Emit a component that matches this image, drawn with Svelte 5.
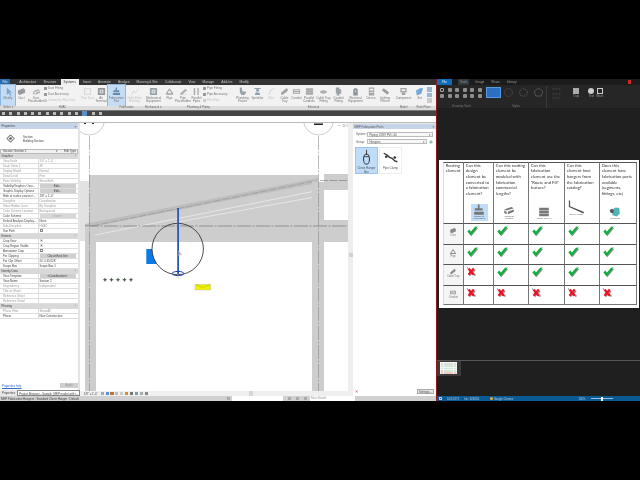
<script>
  const ic = {
    arrow: 'M3 .5V9l2-2 2 2.8 1.3-1L6.4 6.2 9 6z',
    duct: 'M1 4l6-2.5 2 1.5v3.5L3 9 1 7.5zM3 5.5V9',
    ductp: 'M1 4.5l6-2 2 1-6 2zM1 5.5l2 1v2l-2-1zM4 6.5l5-2v2l-5 2z',
    term: 'M1 1h8v8H1zM2.5 2.5v5h5v-5z',
    fab: 'M4 .5h1.5v3H8v2H1.5v-2H4zM1 6.5h8V9H1z',
    point: 'M1 8l3-4 2 2 3-5v1.5L6.2 7.5l-2-2L2 8.8z',
    mech: 'M1 1h8v8H1zM3 3v4h4V3z M4 4h2v2H4z',
    pipe: 'M1 7L5 1.5 9 7v1.5H1zM2.5 7h5L5 3.5z',
    pipep: 'M1 7.5L7 2l2 1.5-6 5.5zM1 8.5h8V9H1z',
    pp: 'M2 1h1.5v8H2zM6 1h1.5v8H6z',
    fix: 'M2 .5h2l1 4.5h4v1.5L7 9H4L2 6z',
    spr: 'M1.5 1h7v1.2H6L7 5H3l1-2.8H1.5zM3 6h4l1 3H2z',
    wire: 'M1.5 9C2 4 5 1.5 9 1v1C5.5 3 3 5 2.5 9z',
    tray: 'M1 6.5L7 1.5l2 1-1 2.5-5 3.5H1.5zM3 6l3.5-2.5',
    cond: 'M1 2.5h8v5H1zM2 3.5v1h6v-1zM2 5.5v1h6v-1z',
    pc: 'M1 1.5h8v2H1zM1 4h8v2H1zM1 6.5h8v2H1z',
    tf: 'M1 5.5C2 3 8 3 9 5.5 8 8 2 8 1 5.5zM3 5.5h4',
    cf: 'M2 .5h4v2h2v5H6v2H3V7H2z',
    eq: 'M3.5 1.5h3v1h1v7h-5v-7h1zM4.5 4v1.5h1V4z',
    dev: 'M2 .5h6v9H2zM3 2v2h4V2zM3 5.5v1h4v-1z',
    light: 'M1 3.5L3 1.5l6 4.5-2 2.5z',
    comp: 'M1.5 1H8.5V6H1.5zM3 2.5V4.500H7V2.500zM3 6.500h4V9H3z',
    set: 'M1 4l5-3 3 .5-2 6-5 2z'
  };
  const tools = [
    { w: 14, t: 'Modify', i: 'arrow', c: '#6f93bd', on: 1 },
    { w: 13, t: 'Duct', i: 'duct', c: '#7d7d7d' },
    { w: 16, t: 'Duct Placeholder', i: 'ductp', c: '#9a9a9a' },
    { w: 37, small: ['Duct Fitting', 'Duct Accessory', 'Convert to Flex Duct'] },
    { w: 13, t: 'Flex Duct', i: 'term', c: '#d5d5d5', off: 1 },
    { w: 14, t: 'Air Terminal', i: 'mech', c: '#777a80' },
    { w: 17, t: 'Fabrication Part', i: 'fab', c: '#4d6f92', on: 1 },
    { w: 19, t: 'Multi-Point Routing', i: 'point', c: '#d2d2d2', off: 1 },
    { w: 19, t: 'Mechanical Equipment', i: 'mech', c: '#7b8a8e' },
    { w: 13, t: 'Pipe', i: 'pipe', c: '#8c8c8c' },
    { w: 14, t: 'Pipe Placeholder', i: 'pipep', c: '#9a9a9a' },
    { w: 13, t: 'Parallel Pipes', i: 'pp', c: '#8f8f8f' },
    { w: 31, small: ['Pipe Fitting', 'Pipe Accessory', 'Flex Pipe'] },
    { w: 17, t: 'Plumbing Fixture', i: 'fix', c: '#7a8a94' },
    { w: 13, t: 'Sprinkler', i: 'spr', c: '#6e8496' },
    { w: 14, t: 'Wire', i: 'wire', c: '#cfcfcf', off: 1 },
    { w: 13, t: 'Cable Tray', i: 'tray', c: '#8c8c8c' },
    { w: 11, t: 'Conduit', i: 'cond', c: '#8a8a8a' },
    { w: 14, t: 'Parallel Conduits', i: 'pc', c: '#8f8f8f' },
    { w: 15, t: 'Cable Tray Fitting', i: 'tf', c: '#999' },
    { w: 15, t: 'Conduit Fitting', i: 'cf', c: '#7f8a92' },
    { w: 19, t: 'Electrical Equipment', i: 'eq', c: '#6d7480' },
    { w: 12, t: 'Device', i: 'dev', c: '#8e8e8e' },
    { w: 16, t: 'Lighting Fixture', i: 'light', c: '#808080' },
    { w: 21, t: 'Component', i: 'comp', c: '#8d8d8d' },
    { w: 11, t: 'Set', i: 'set', c: '#4f8fd0' },
    { w: 8, mini: 1 }
  ];
  const tabs = ['Architecture', 'Structure', 'Systems', 'Insert', 'Annotate', 'Analyze', 'Massing & Site', 'Collaborate', 'View', 'Manage', 'Add-Ins', 'Modify'];
  const panels = [
    { w: 15, t: 'Select ▾' }, { w: 93, t: 'HVAC' }, { w: 35, t: 'Fabrication' }, { w: 19, t: 'Mechanical ▾' },
    { w: 71, t: 'Plumbing & Piping' }, { w: 159, t: 'Electrical' }, { w: 21, t: 'Model' }, { w: 19, t: 'Work Plane' }
  ];
  const sections = [
    { h: 'Graphics', rows: [
      ['View Scale', '1/4" = 1\'-0"', 'dim'], ['Scale Value    1:', '48', 'dim'], ['Display Model', 'Normal', 'dim'],
      ['Detail Level', 'Fine', 'dim'], ['Parts Visibility', 'Show Both', 'dim'],
      ['Visibility/Graphics Over...', 'Edit...', 'btn'], ['Graphic Display Options', 'Edit...', 'btn'],
      ['Hide at scales coarser t...', '1/8" = 1\'-0"'], ['Discipline', 'Coordination', 'dim'],
      ['Show Hidden Lines', 'By Discipline', 'dim'], ['Color Scheme Location', 'Background', 'dim'],
      ['Color Scheme', '<none>', 'btnd'], ['Default Analysis Display...', 'None'],
      ['Sub-Discipline', 'HVAC', 'dim'], ['Sun Path', '', 'off']
    ] },
    { h: 'Extents', rows: [
      ['Crop View', '', 'on'], ['Crop Region Visible', '', 'on'], ['Annotation Crop', '', 'off'],
      ['Far Clipping', 'Clip without line', 'btn'], ['Far Clip Offset', '20\' 0 45/128"'], ['Scope Box', 'Scope Box 1']
    ] },
    { h: 'Identity Data', rows: [
      ['View Template', '<Coordination>', 'btn'], ['View Name', 'Section 2'], ['Dependency', 'Independent', 'dim'],
      ['Title on Sheet', '', 'dim'], ['Reference Sheet', '', 'dim'], ['Reference Detail', '', 'dim']
    ] },
    { h: 'Phasing', rows: [['Phase Filter', 'Show All', 'dim'], ['Phase', 'New Construction']] }
  ];
  const heads = [
    ['Routing', 'element'],
    ['Can this', 'design', 'element be', 'converted to', 'a fabrication', 'element?'],
    ['Can this routing', 'element be', 'modeled with', 'fabrication', 'commercial', 'lengths?'],
    ['Can this', 'fabrication', 'element use the', '"Route and Fill"', 'feature?'],
    ['Can this', 'element host', 'hangers from', 'the fabrication', 'catalog?'],
    ['Does this', 'element have', 'fabrication parts', 'available', '(segments,', 'fittings, etc)']
  ];
  const headIcons = [null, 'Design to Fabrication', 'Optimize Lengths', 'Route and Fill', 'Stock Hanger', 'Stretches'];
  const rows = [
    { t: 'Duct', i: 'duct', v: [1, 1, 1, 1, 1] },
    { t: 'Pipe', i: 'pipe', v: [1, 1, 1, 1, 1] },
    { t: 'Cable Tray', i: 'tray', v: [0, 1, 1, 1, 1] },
    { t: 'Conduit', i: 'cond', v: [0, 0, 0, 0, 0] }
  ];
  const rightTools = [1, 2, 3, 4, 5, 6, 7, 8, 9, 10, 11, 12];
</script>

<div class="page">
  <div class="app">
    <section class="left">
      <div class="tabs">
        <span class="file">File</span>
        {#each tabs as t}<span class="tab" class:active={t === 'Systems'}>{t}</span>{/each}
      </div>
      <div class="ribbon">
        {#each tools as b}
          <div class="tool" class:on={b.on} class:off={b.off} style:width="{b.w}px">
            {#if b.small}
              <div class="smalls">{#each b.small as s, n}<span class:faint={n === 2}><i></i>{s}</span>{/each}</div>
            {:else if b.mini}
              <div class="minis"><i></i><i></i><i></i></div>
            {:else}
              <svg viewBox="0 0 10 10" class="ticon"><path d={ic[b.i]} fill={b.c} fill-rule="evenodd" /></svg>
              <span>{b.t}</span>
            {/if}
          </div>
        {/each}
      </div>
      <div class="plabels">
        {#each panels as p}<span style:width="{p.w}px">{p.t}</span>{/each}
      </div>
      <div class="qat">
        {#each Array(14) as _, n}<i class:hl={n === 11}></i>{/each}
      </div>
      <div class="blank"></div>
      <div class="work">
        <aside class="props">
          <div class="ptitle"><span>Properties</span><b>×</b></div>
          <div class="ptype">
            <svg viewBox="0 0 10 10"><path d="M5 1l4 4-4 4-4-4z" fill="none" stroke="#333" /><circle cx="5" cy="5" r="1.400" fill="#555" /></svg>
            <div>Section<br />Building Section</div>
          </div>
          <div class="psel"><span>Section: Section 2</span><em>▾</em><span class="edit">Edit Type</span></div>
          {#each sections as s}
            <div class="phead"><span>{s.h}</span><b>⌃</b></div>
            {#each s.rows as r}
              <div class="prow" class:dim={r[2] === 'dim'}>
                <span class="k">{r[0]}</span>
                {#if r[2] === 'on' || r[2] === 'off'}
                  <span class="v"><i class="chk" class:ticked={r[2] === 'on'}></i></span>
                {:else if r[2] === 'btn' || r[2] === 'btnd'}
                  <span class="v"><span class="pbtn" class:faintbtn={r[2] === 'btnd'}>{r[1]}</span></span>
                {:else}
                  <span class="v">{r[1]}</span>
                {/if}
              </div>
            {/each}
          {/each}
          <div class="grow"></div>
          <div class="phelp"><a href="#help">Properties help</a><span class="apply">Apply</span></div>
          <div class="ptabs"><span>Properties</span><span>Project Browser - Sample_MEP model with t...</span></div>
        </aside>

        <div class="viewcol">
          <div class="viewrow">
            <svg class="canvas" viewBox="80 123 268 268" preserveAspectRatio="none">
              <rect x="80" y="123" width="268" height="268" fill="#fff" />
              <circle cx="89.500" cy="120" r="15" fill="#fff" stroke="#a8a8a8" stroke-width=".6" />
              <circle cx="318.500" cy="120" r="15" fill="#fff" stroke="#a8a8a8" stroke-width=".6" />
              <rect x="84" y="123" width="2" height="1" fill="#222" />
              <rect x="92" y="123" width="2" height="1" fill="#222" />
              <rect x="314" y="123.500" width="9" height="1.500" fill="#222" />
              <rect x="80" y="181" width="9" height="60" fill="#e2e2e2" />
              <path d="M89 175H318V190L312 192V242H96V235H89z" fill="#cdcdcd" />
              <path d="M85 224L318 178V183L85 228z" fill="#bdbdbd" />
              <rect x="85" y="228" width="11" height="163" fill="#cdcdcd" />
              <rect x="312" y="182" width="12" height="209" fill="#cdcdcd" />
              <rect x="324" y="174" width="24" height="16" fill="#cdcdcd" />
              <rect x="324" y="220" width="24" height="22" fill="#cdcdcd" />
              <rect x="85" y="226" width="5" height="2" fill="#d8d8d8" />
              <path d="M95 235L312 191.700M175 222.500L312 197.500" stroke="#f1f1f1" stroke-width=".7" fill="none" />
              <path d="M92 226L312 181.500" stroke="#777" stroke-width=".4" stroke-dasharray="8 1.500" fill="none" />
              <path d="M320 180.500H348" stroke="#666" stroke-width=".5" stroke-dasharray="8 1.500" fill="none" />
              <path d="M85 226H348" stroke="#666" stroke-width=".6" stroke-dasharray="14 1.500 2 1.500" fill="none" />
              <path d="M89.500 136V391M318.500 136V391" stroke="#777" stroke-width=".5" stroke-dasharray="14 1.500 2 1.500" fill="none" />
              <path d="M146.300 249H152A25.700 25.700 0 0 0 156.800 264H146.300z" fill="#0a7be6" />
              <circle cx="177.700" cy="249" r="25.700" fill="none" stroke="#222" stroke-width=".8" />
              <rect x="177.200" y="208" width="1.800" height="66" fill="#2b57b8" />
              <ellipse cx="178" cy="273.500" rx="5.800" ry="2.100" fill="none" stroke="#1c3fb0" stroke-width="1" />
              <path d="M178 274V279" stroke="#aaa" stroke-width=".5" />
              <path d="M178.500 250.500v6l1.500-1.500 2-.2z" fill="#bbb" />
              <g fill="#4a5a4a">
                {#each [105, 111.500, 118, 124.500, 131] as x}
                  <path d="M{x} 277.500l.7 1.500 1.500.7-1.500.7-.7 1.500-.7-1.500-1.500-.7 1.500-.7z" />
                {/each}
              </g>
              <rect x="195" y="284.300" width="15.700" height="5.700" fill="#f0f000" stroke="#bbb" stroke-width=".4" />
              <path d="M196 285l6.800 2.500 7-2.500" stroke="#99a000" stroke-width=".4" fill="none" />
              <path d="M337.500 125.500h3M343 124.500h2v2h-2zM346.500 124.500l1.400 2M347.900 124.500l-1.400 2" stroke="#888" stroke-width=".4" fill="none" />
            </svg>
            <div class="vscroll"><i></i></div>
          </div>
          <div class="viewbar">
            <span>1/8" = 1'-0"</span>
            <div class="vcicons">
              {#each ['#aaa', '#5a8fd0', '#c07030', '#bbb', '#ccc', '#d09030', '#777', '#7a9ac0', '#aaa', '#888'] as c}<i style:background={c}></i>{/each}
            </div>
            <div class="hscroll"><i></i></div>
          </div>
        </div>

        <aside class="fab">
          <div class="ftitle"><span>MEP Fabrication Parts</span><b>×</b></div>
          <div class="frow"><label for="sys">System:</label><span id="sys" class="fsel">Piping: DWV PVC 40<em>▾</em></span></div>
          <div class="frow"><label for="grp">Group:</label><span id="grp" class="fsel short">Hangers<em>▾</em></span><i class="wrench"></i></div>
          <div class="items">
            <div class="item sel">
              <svg viewBox="0 0 20 20"><path d="M10 1v6" stroke="#444" stroke-width="1.200" /><ellipse cx="10" cy="12" rx="3.500" ry="6" fill="none" stroke="#333" stroke-width="1.200" /><path d="M7 9h6" stroke="#333" /></svg>
              <span>Clevis Hanger Bar</span>
            </div>
            <div class="item">
              <svg viewBox="0 0 20 20"><path d="M2 5l4 2 3 3 3 1 3 3 3 1" stroke="#333" stroke-width="1.600" fill="none" /><circle cx="5" cy="9" r="1.500" fill="#333" /><circle cx="15" cy="10" r="1.500" fill="#333" /></svg>
              <span>Pipe Clamp</span>
            </div>
          </div>
          <div class="grow"></div>
          <div class="ffoot"><span class="xmark">✕</span><span class="settings">Settings...</span></div>
        </aside>
      </div>
      <div class="status">
        <span>MEP Fabrication Hangers : Standard Clevis Hanger : Default</span>
        <div class="sright"><i class="filter"></i><span class="sinput"></span><i class="filter"></i><i class="filter"></i><i class="filter"></i><span class="sinput short">Main Model</span></div>
      </div>
    </section>

    <section class="right">
      <div class="rtabs">
        <span class="rfile">File</span>
        <span class="rtab cur">Tools</span><span class="rtab">Image</span><span class="rtab">Share</span><span class="rtab">Library</span>
        <span class="rflag"></span>
      </div>
      <div class="rribbon">
        <div class="rpanel draw">
          <div class="rgrid">{#each rightTools as n}<i class:box={n === 1}></i>{/each}</div>
          <span>Drawing Tools</span>
        </div>
        <div class="rpanel styles">
          <div class="shapes">
            <i class="bluebox"></i>
            <svg viewBox="0 0 14 14"><circle cx="7" cy="7" r="5" fill="none" stroke="#777" stroke-width=".7" stroke-dasharray="1.500 1" /></svg>
            <svg viewBox="0 0 14 14"><path d="M7 1.500l5.500 4-2 6h-7l-2-6z" fill="none" stroke="#777" stroke-width=".7" stroke-dasharray="1.500 1" /></svg>
            <svg viewBox="0 0 14 14"><path d="M7 1.500l5.500 4-2 6h-7l-2-6z" fill="none" stroke="#777" stroke-width=".7" /></svg>
          </div>
          <span>Styles</span>
        </div>
        <div class="rpanel acts">
          <div class="lines"><em>━━━ ▾</em><em>━━━ ▾</em><em>━━━ ▾</em></div>
          <div class="big crop"><i></i><b>Crop</b></div>
          <div class="big txt"><i class="round"></i><b>Text</b></div>
          <div class="big"><i class="sq"></i><b>Share</b></div>
        </div>
      </div>
      <div class="slide">
        <div class="table">
          {#each heads as h, n}
            <div class="cell head">
              <p>{#each h as line}<span>{line}</span>{/each}</p>
              {#if headIcons[n]}
                <div class="hicon" class:blue={n === 1} class:hanger={n === 4}>
                  {#if n === 4}
                    <svg viewBox="0 0 20 16"><path d="M1 0L2.500 .5V7L19 14 18 15.500 1 8z" fill="#555" /></svg>
                  {:else if n === 5}
                    <svg viewBox="0 0 20 17"><path d="M4 5l7-4 6 1 1 9-5 5-7-2z" fill="#4fb3b8" /><path d="M1 5l4-2 3 3-1 4-4 0z" fill="#555" /></svg>
                  {:else}
                    <svg viewBox="0 0 10 10"><path d={n === 1 ? ic.fab : n === 2 ? ic.ductp : ic.pc} fill="#777" fill-rule="evenodd" /></svg>
                  {/if}
                  <span>{headIcons[n]}</span>
                </div>
              {/if}
            </div>
          {/each}
          {#each rows as r}
            <div class="cell rowhead">
              <svg viewBox="0 0 10 10"><path d={ic[r.i]} fill="#8a8a8a" fill-rule="evenodd" /></svg>
              <span>{r.t}</span>
            </div>
            {#each r.v as v}
              <div class="cell mark">
                {#if v}
                  <svg class="check" viewBox="0 0 12 11"><path d="M1.500 6.500L4.500 10.800 11.900 2 9 2.300 4.600 7.300 3.500 5z" fill="#8e8e8e" /><path d="M.3 5.500L3.800 10 11.300 .6 8.400 .9 3.900 6 2.700 3.700z" fill="#10b03c" /></svg>
                {:else}
                  <svg class="cross" viewBox="0 0 9 9"><path d="M2 3.500L8.500 8.500M8 3L2.500 8.500" stroke="#8e8e8e" stroke-width="1.600" /><path d="M1.500 1.500L6.800 7.800M6.800 1.500L1.500 7.800" stroke="#ee1122" stroke-width="2.200" /><path d="M.5 0V2" stroke="#777" stroke-width=".5" /></svg>
                {/if}
              </div>
            {/each}
          {/each}
        </div>
      </div>
      <div class="rgap"></div>
      <div class="strip">
        <div class="thumbcell">
          <div class="thumb">
            {#each Array(5) as _, y}{#each Array(5) as _, x}<i class:red={y === 3 && x === 0 || y === 4} class:hd={y === 0}></i>{/each}{/each}
          </div>
        </div>
      </div>
      <div class="rgrow"></div>
      <div class="rstatus">
        <i class="sq1"></i><span>10/11/175</span><span>Ink: 324/451</span>
        <span class="chrome"><i></i>Google Chrome</span>
        <span class="zoomtxt">150%</span><span class="slider"><i></i></span>
      </div>
    </section>
  </div>
</div>

<style>
  :global(body) { margin: 0; background: #000; }
  .page { width: 640px; height: 480px; background: #000; padding-top: 79px; box-sizing: border-box; overflow: hidden; font-family: "Liberation Sans", Arial, sans-serif; }
  .app { display: flex; height: 322px; filter: blur(.4px); }
  i { display: block; font-style: normal; }
  em { font-style: normal; }

  .left { width: 436px; display: flex; flex-direction: column; background: #f0f0f0; flex: none; border-right: 1px solid #8a1a1a; }

  .tabs { height: 6px; background: #333; display: flex; align-items: center; gap: 5.200px; font-size: 3.200px; color: #c8c8c8; flex: none; }
  .file { width: 10px; height: 100%; background: #2b6cb0; color: #dce8f5; text-align: center; line-height: 6px; margin-right: 3px; }
  .tab { line-height: 6px; padding: 0 1px; }
  .tab.active { background: #f0f0f0; color: #444; padding: 0 3px; margin: 0 -2px; }

  .ribbon { height: 21px; display: flex; padding-left: 1px; background: #f2f2f2; flex: none; }
  .tool { flex: none; display: flex; flex-direction: column; align-items: center; font-size: 3px; line-height: 3.500px; color: #777; text-align: center; padding-top: 2px; box-sizing: border-box; }
  .tool.on { background: #c4ddf5; outline: .5px solid #8db7e0; outline-offset: -.5px; }
  .tool.off { color: #c0c0c0; }
  .ticon { width: 9px; height: 9px; margin-bottom: .5px; flex: none; opacity: .75; }
  .smalls { display: flex; flex-direction: column; gap: 2.500px; align-self: flex-start; margin-top: 0; text-align: left; white-space: nowrap; }
  .smalls span { display: flex; align-items: center; gap: 1px; }
  .smalls i { width: 3px; height: 3px; background: #999; }
  .smalls .faint { color: #c0c0c0; }
  .smalls .faint i { background: #ccc; }
  .minis { display: flex; flex-direction: column; gap: 1px; }
  .minis i { width: 5px; height: 4.500px; background: #9db7d2; }
  .minis i:last-child { background: #ccc; }
  .plabels { height: 3.500px; background: #dcdcdc; display: flex; padding-left: 1px; font-size: 2.800px; line-height: 3.500px; color: #666; flex: none; }
  .plabels span { flex: none; text-align: center; white-space: nowrap; }
  .qat { height: 6.500px; background: #454545; display: flex; align-items: center; gap: 4.300px; padding-left: 2px; flex: none; border-top: .5px solid #777; box-sizing: border-box; }
  .qat i { width: 3px; height: 3px; background: #bbb; flex: none; }
  .qat .hl { width: 5px; height: 5px; background: #5b8fc9; }
  .blank { height: 7px; background: #fff; flex: none; border-bottom: .5px solid #bbb; box-sizing: border-box; }

  .work { height: 273px; display: flex; flex: none; background: #e4e4e4; }
  .props { width: 78px; margin-right: 2px; display: flex; flex-direction: column; background: #fff; font-size: 2.900px; color: #444; flex: none; }
  .ptitle { height: 6px; background: #c5d4e6; display: flex; justify-content: space-between; align-items: center; padding: 0 1.500px; font-size: 3px; flex: none; }
  .ptitle b { font-size: 4px; font-weight: 400; }
  .ptype { height: 19.500px; display: flex; align-items: center; gap: 8px; padding-left: 6px; line-height: 4.200px; flex: none; box-sizing: border-box; }
  .ptype svg { width: 9px; height: 9px; }
  .psel { height: 5.500px; background: #f1f1f1; border: .3px solid #bbb; display: flex; align-items: center; padding-left: 2px; flex: none; box-sizing: border-box; }
  .psel em { margin-left: auto; margin-right: 1px; }
  .psel .edit { padding: 0 1px 0 5px; }
  .phead { height: 4.600px; margin-top: .4px; background: #d9d9d9; display: flex; justify-content: space-between; padding: 0 1.500px; line-height: 4.600px; flex: none; }
  .phead b { font-weight: 400; }
  .prow { height: 5px; display: flex; border-bottom: .3px solid #ddd; line-height: 4.800px; flex: none; box-sizing: border-box; white-space: nowrap; overflow: hidden; }
  .prow.dim { color: #999; }
  .k { width: 38.500px; padding-left: 3px; box-sizing: border-box; overflow: hidden; flex: none; border-right: .3px solid #ddd; }
  .v { flex: 1; padding-left: 1px; display: flex; align-items: center; }
  .chk { width: 3px; height: 3px; border: .3px solid #888; box-sizing: border-box; background: #fff; }
  .chk.ticked { background: #777; border: .8px solid #ddd; }
  .pbtn { display: block; width: 36px; height: 4.500px; line-height: 4.500px; background: #cfcfcf; text-align: center; color: #444; }
  .pbtn.faintbtn { background: #d8d8d8; color: #aaa; }
  .grow { flex: 1; }
  .phelp { height: 6px; display: flex; justify-content: space-between; align-items: center; padding: 0 0 0 2px; flex: none; margin-bottom: 1px; }
  .phelp a { color: #2f6fd0; text-decoration: underline; }
  .apply { width: 18px; height: 5.500px; line-height: 5.500px; background: #d0d0d0; text-align: center; color: #999; }
  .ptabs { height: 6.500px; display: flex; gap: 1px; background: #e8e8e8; padding: 0 0 0 1px; flex: none; line-height: 6px; white-space: nowrap; color: #444; box-sizing: border-box; }
  .ptabs span { padding: 0 1px; }
  .ptabs span:last-child { background: #fff; border: .3px solid #888; }

  .viewcol { width: 273px; display: flex; flex-direction: column; margin-right: 0; flex: none; }
  .viewrow { height: 268px; display: flex; flex: none; }
  .canvas { width: 268px; height: 268px; display: block; flex: none; }
  .vscroll { width: 5px; background: #eee; position: relative; }
  .vscroll i { position: absolute; left: .5px; top: 130px; width: 4px; height: 4px; background: #d0d0d0; }
  .viewbar { height: 5px; background: #f0f0f0; display: flex; align-items: center; font-size: 2.800px; color: #444; padding-left: 4px; flex: none; white-space: nowrap; }
  .vcicons { display: flex; gap: 1.700px; margin-left: 3px; }
  .vcicons i { width: 3.200px; height: 3.200px; }
  .hscroll { flex: 1; margin-left: 6px; height: 100%; position: relative; background: #efefef; }
  .hscroll i { position: absolute; left: 95px; width: 4px; height: 5px; background: #d5d5d5; }

  .fab { flex: 1; background: #fff; display: flex; flex-direction: column; font-size: 2.900px; color: #555; margin-top: 1px; }
  .ftitle { height: 5px; background: #c5d4e6; display: flex; justify-content: space-between; align-items: center; padding: 0 1.500px; flex: none; }
  .ftitle b { font-size: 4px; font-weight: 400; }
  .frow { display: flex; align-items: center; height: 5px; margin-top: 2.500px; padding-left: 3px; gap: 2px; flex: none; }
  .frow label { width: 9px; }
  .fsel { width: 66px; height: 5px; border: .3px solid #bbb; box-sizing: border-box; display: flex; justify-content: space-between; padding: 0 1.500px; line-height: 4.500px; background: #f7f7f7; }
  .fsel.short { width: 60px; }
  .wrench { width: 4px; height: 4px; background: #9bb; transform: rotate(45deg) scale(.7); }
  .items { display: flex; gap: 1px; margin: 3px 0 0 2px; flex: none; }
  .item { width: 23px; height: 27px; display: flex; flex-direction: column; align-items: center; text-align: center; line-height: 4px; box-sizing: border-box; padding-top: 1px; color: #555; border: .3px solid #eee; }
  .item.sel { background: #bfdcf8; border-color: #9cc4ee; }
  .item svg { width: 17px; height: 17px; flex: none; }
  .ffoot { display: flex; align-items: center; justify-content: space-between; height: 6px; padding: 0 2px; flex: none; margin-bottom: 1.500px; }
  .xmark { color: #d33; font-size: 4px; }
  .settings { width: 17px; height: 5.500px; line-height: 5.500px; text-align: center; background: #e4e4e4; border: .3px solid #aaa; box-sizing: border-box; }

  .status { flex: 1; background: #d0d0d0; display: flex; align-items: center; justify-content: space-between; font-size: 2.900px; color: #444; padding-left: 1px; white-space: nowrap; }
  .sright { display: flex; align-items: center; gap: 5px; margin-right: 81px; height: 100%; }
  .sinput { width: 51px; height: 100%; background: #fff; margin-left: -3px; }
  .sinput.short { width: 45px; color: #999; line-height: 4.600px; padding-left: 1px; box-sizing: border-box; margin-left: -2px; }
  .filter { width: 3px; height: 3px; background: #aaa; }

  .right { flex: 1; display: flex; flex-direction: column; background: #1f1f1f; color: #aaa; }
  .rtabs { height: 6px; display: flex; align-items: center; font-size: 3.200px; gap: 5px; background: #1c1c1c; flex: none; position: relative; }
  .rfile { width: 15px; height: 100%; background: #0f6cb8; color: #e0ecf7; text-align: center; line-height: 6px; margin-right: 1px; }
  .rtab { line-height: 6px; padding: 0 1px; color: #999; }
  .rtab.cur { background: #303840; padding: 0 2px; }
  .rflag { position: absolute; right: 9px; top: 1px; width: 3px; height: 4px; background: #d22; }
  .rribbon { height: 23px; background: #262626; display: flex; padding-top: 1px; flex: none; box-sizing: border-box; }
  .rpanel { display: flex; flex-direction: column; font-size: 3px; color: #777; align-items: center; flex: none; }
  .rpanel > span { margin-top: auto; margin-bottom: .5px; }
  .draw { width: 49px; }
  .rgrid { display: grid; grid-template-columns: repeat(6, 5px); gap: 2px 2.500px; padding-top: 2px; }
  .rgrid i { width: 4px; height: 4px; background: #8e8e8e; border-radius: 1px; }
  .rgrid .box { background: none; border: .5px solid #aaa; box-sizing: border-box; }
  .styles { width: 61px; border-right: .5px solid #3a3a3a; box-sizing: border-box; align-items: flex-start; }
  .styles > span { align-self: center; }
  .shapes { display: flex; align-items: center; gap: 4px; padding-top: 1px; }
  .shapes svg { width: 11px; height: 11px; }
  .shapes .bluebox + svg { margin-left: -2.500px; }
  .bluebox { width: 15px; height: 11px; background: #2a6fc0; border: .5px solid #5a9ae0; box-sizing: border-box; }
  .acts { flex-direction: row; align-items: flex-start; padding: 2px 0 0 5px; width: 60px; box-sizing: border-box; }
  .lines { display: flex; flex-direction: column; gap: 1.500px; width: 15px; font-size: 2.500px; color: #555; line-height: 3px; white-space: nowrap; }
  .big { display: flex; flex-direction: column; align-items: center; font-size: 2.800px; color: #999; gap: 1px; line-height: 3px; width: 8px; }
  .big.crop { margin-left: 5px; }
  .big.txt { margin-left: 7.300px; margin-right: .4px; }
  .big b { font-weight: 400; text-align: center; }
  .big i { width: 6px; height: 6px; background: #aaa; }
  .big .round { border-radius: 50%; background: #ccc; }
  .big .sq { background: none; border: .8px solid #ccc; box-sizing: border-box; }

  .slide { margin: 52px 1.500px 0 1.500px; height: 147.700px; background: #fff; padding: 1.500px 0 0 4.200px; box-sizing: border-box; flex: none; }
  .table { display: grid; grid-template-columns: 20px 30px 35px 36px 35px 38px; grid-template-rows: 61.600px 20.700px 20.300px 20.700px 20px; }
  .cell { border-top: .6px solid #555; border-left: .6px solid #777; box-sizing: border-box; }
  .cell:nth-child(6n + 1) { border-left-color: #ddd; }
  .cell:nth-child(6n) { border-right: .6px solid #777; }
  .cell:nth-last-child(-n + 6) { border-bottom: .6px solid #777; }
  .head { font-family: Lato, "Open Sans", sans-serif; font-size: 4.200px; line-height: 5.700px; color: #333; padding: 0 0 0 2px; display: flex; flex-direction: column; white-space: nowrap; }
  .head p { margin: 0; display: flex; flex-direction: column; }
  .hicon { margin-top: auto; margin-bottom: 2px; display: flex; flex-direction: column; align-items: center; width: 17px; font-size: 2.400px; line-height: 2.800px; color: #666; text-align: center; margin-left: 5px; white-space: normal; }
  .hicon svg { width: 12px; height: 12px; flex: none; }
  .hicon.blue { background: #bfdcf8; }
  .hicon.hanger { margin-bottom: 6px; margin-left: 1px; }
  .hicon.hanger svg { width: 17px; height: 14px; }
  .rowhead { display: flex; flex-direction: column; align-items: center; font-size: 2.600px; line-height: 3px; color: #777; background: #f5f5f5; padding-top: 3px; text-align: center; }
  .rowhead svg { width: 8px; height: 7px; flex: none; }
  .mark { padding: 2px 0 0 3px; }
  .check { width: 11.500px; height: 10.500px; display: block; }
  .cross { width: 9px; height: 9px; display: block; }

  .rgap { height: 52.300px; flex: none; border-bottom: 1px solid #555; box-sizing: content-box; }
  .strip { height: 15px; flex: none; }
  .thumbcell { width: 24px; height: 100%; background: #3a3a3a; padding: 1.500px 3px; box-sizing: border-box; }
  .thumb { width: 17px; height: 12px; background: #f4f4f4; display: grid; grid-template-columns: repeat(5, 1fr); gap: .6px; padding: .6px; box-sizing: border-box; }
  .thumb i { background: #d0e8d4; }
  .thumb .red { background: #f0c8c8; }
  .thumb .hd { background: #ddd; }
  .rgrow { flex: 1; }
  .rstatus { height: 4.700px; background: #0a5a96; display: flex; align-items: center; font-size: 2.800px; color: #bcd; padding-left: 2px; gap: 5px; flex: none; white-space: nowrap; }
  .sq1 { width: 3px; height: 3px; border: .4px solid #bcd; box-sizing: border-box; }
  .chrome { display: flex; align-items: center; gap: 1px; margin-left: 5px; }
  .chrome i { width: 3px; height: 3px; border-radius: 50%; background: #e8b030; }
  .zoomtxt { margin-left: 60px; }
  .slider { width: 22px; height: .6px; background: #9bd; position: relative; }
  .slider i { position: absolute; left: 10px; top: -1.500px; width: 2px; height: 4px; background: #fff; }
</style>
